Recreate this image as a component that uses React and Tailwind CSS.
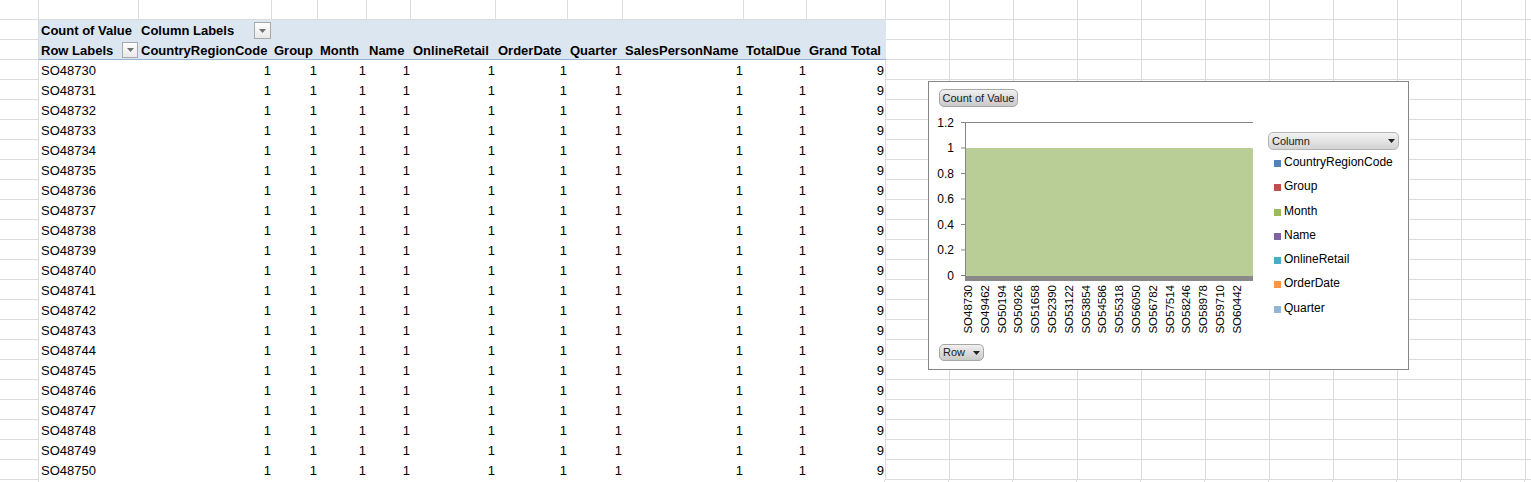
import React from "react";

const grid = "border-[#dadcdd]";

const valueCols = [
  { name: "CountryRegionCode", w: "w-[133px]" },
  { name: "Group", w: "w-[46px]" },
  { name: "Month", w: "w-[49px]" },
  { name: "Name", w: "w-[44px]" },
  { name: "OnlineRetail", w: "w-[85px]" },
  { name: "OrderDate", w: "w-[72px]" },
  { name: "Quarter", w: "w-[55px]" },
  { name: "SalesPersonName", w: "w-[121px]" },
  { name: "TotalDue", w: "w-[63px]" },
];

const extraCols = Array.from({ length: 11 }, (_, i) => i);

const rowLabels = Array.from({ length: 21 }, (_, i) => "SO" + (48730 + i));

const xLabels = [
  "SO48730", "SO49462", "SO50194", "SO50926", "SO51658", "SO52390",
  "SO53122", "SO53854", "SO54586", "SO55318", "SO56050", "SO56782",
  "SO57514", "SO58246", "SO58978", "SO59710", "SO60442",
];

const yTicks = ["1.2", "1", "0.8", "0.6", "0.4", "0.2", "0"];

const legend = [
  { name: "CountryRegionCode", color: "bg-[#4f81bd]" },
  { name: "Group", color: "bg-[#c0504d]" },
  { name: "Month", color: "bg-[#9bbb59]" },
  { name: "Name", color: "bg-[#8064a2]" },
  { name: "OnlineRetail", color: "bg-[#4bacc6]" },
  { name: "OrderDate", color: "bg-[#f79646]" },
  { name: "Quarter", color: "bg-[#95b3d7]" },
];

function Triangle({ color = "#000" }) {
  return (
    <svg width="7" height="4" viewBox="0 0 7 4">
      <path d="M0 0H7L3.5 4Z" fill={color} />
    </svg>
  );
}

function FilterButton({ w, h }) {
  return (
    <div
      className={`${w} ${h} mt-[2px] mr-[1px] shrink-0 flex items-center justify-center border border-[#a9a9a9] bg-linear-to-b from-[#fdfdfd] to-[#e9e9e9]`}
    >
      <Triangle color="#707070" />
    </div>
  );
}

function ColA() {
  return <div className={`w-[39px] shrink-0 h-full border-r border-b ${grid}`} />;
}

function Extras() {
  return extraCols.map((i) => (
    <div key={i} className={`w-[64px] shrink-0 h-full border-r border-b ${grid}`} />
  ));
}

function Chart() {
  return (
    <div className="absolute left-[928px] top-[81px] w-[481px] h-[289px] border border-[#868686] bg-white flex flex-col">
      <div className="pl-[10px] pt-[7px]">
        <div className="w-[79px] h-[18px] rounded-[5px] border border-[#a6a6a6] bg-linear-to-b from-[#f0f0f0] to-[#c9c9c9] text-[11px] leading-[16px] text-center text-[#1a1a1a]">
          Count of Value
        </div>
      </div>

      <div className="flex">
        <svg width="332" height="230" fontFamily="Liberation Sans, Arial, sans-serif">
          <rect x="37" y="41" width="287" height="128" fill="#b9cd96" />
          <rect x="37" y="169" width="287" height="5" fill="#898989" />
          <line x1="36" y1="15.5" x2="324" y2="15.5" stroke="#868686" />
          <line x1="36.5" y1="15.5" x2="36.5" y2="174" stroke="#868686" />
          {yTicks.map((t, i) => {
            const y = 15.5 + i * 25.5;
            return (
              <g key={t}>
                <line x1="32" y1={y} x2="36" y2={y} stroke="#868686" />
                <text x="25" y={y + 4.2} fontSize="12" textAnchor="end" fill="#000">
                  {t}
                </text>
              </g>
            );
          })}
          {xLabels.map((l, i) => {
            const x = 43 + i * 16.8;
            return (
              <text
                key={l}
                x={x}
                y="178"
                fontSize="11.5"
                textAnchor="end"
                fill="#000"
                transform={`rotate(-90 ${x} 178)`}
              >
                {l}
              </text>
            );
          })}
        </svg>

        <div className="ml-[7px] mt-[25px] w-[131px]">
          <div className="h-[18px] rounded-[5px] border border-[#b4b4b4] bg-linear-to-b from-[#f3f3f3] to-[#d3d3d3] flex items-center justify-between pl-[3px] pr-[3px] text-[11px] text-[#1a1a1a]">
            <span>Column</span>
            <Triangle color="#222" />
          </div>
          {legend.map((it) => (
            <div key={it.name} className="flex items-start h-[24.3px] pl-[6px]">
              <div className={`mt-[10px] w-[7px] h-[7px] mr-[3px] shrink-0 ${it.color}`} />
              <span className="text-[12px] leading-[24.3px] text-black">{it.name}</span>
            </div>
          ))}
        </div>
      </div>

      <div className="pl-[10px] mt-[7px]">
        <div className="w-[45px] h-[17px] rounded-[5px] border border-[#a6a6a6] bg-linear-to-b from-[#f0f0f0] to-[#c9c9c9] flex items-center justify-between pl-[3px] pr-[3px] text-[11px] text-[#1a1a1a]">
          <span>Row</span>
          <Triangle color="#222" />
        </div>
      </div>
    </div>
  );
}

export default function App() {
  return (
    <div className="relative w-[1531px] h-[482px] overflow-hidden bg-white font-['Liberation_Sans',Arial,sans-serif] text-[13px] text-black">
      {/* top blank row */}
      <div className="flex h-[20px]">
        <ColA />
        <div className={`w-[100px] shrink-0 h-full border-r border-b ${grid}`} />
        {valueCols.map((c) => (
          <div key={c.name} className={`${c.w} shrink-0 h-full border-r border-b ${grid}`} />
        ))}
        <div className={`w-[79px] shrink-0 h-full border-r border-b ${grid}`} />
        <Extras />
      </div>

      {/* pivot header row 1 */}
      <div className="flex h-[20px] leading-[21px] font-bold">
        <ColA />
        <div className="w-[847px] shrink-0 h-full flex bg-[#dce6f1]">
          <div className="w-[100px] shrink-0 pl-[2px] whitespace-nowrap">Count of Value</div>
          <div className="w-[133px] shrink-0 pl-[2px] flex justify-between items-start whitespace-nowrap">
            <span>Column Labels</span>
            <FilterButton w="w-[17px]" h="h-[17px]" />
          </div>
        </div>
        <Extras />
      </div>

      {/* pivot header row 2 */}
      <div className="flex h-[20px] leading-[21px] font-bold">
        <ColA />
        <div className="w-[847px] shrink-0 h-full flex bg-[#dce6f1] border-b border-[#95b3d7]">
          <div className="w-[100px] shrink-0 pl-[2px] flex justify-between items-start whitespace-nowrap">
            <span>Row Labels</span>
            <FilterButton w="w-[16px]" h="h-[16px]" />
          </div>
          {valueCols.map((c) => (
            <div key={c.name} className={`${c.w} shrink-0 pl-[2px] whitespace-nowrap`}>
              {c.name}
            </div>
          ))}
          <div className="w-[79px] shrink-0 pl-[2px] whitespace-nowrap">Grand Total</div>
        </div>
        <Extras />
      </div>

      {/* data rows */}
      {rowLabels.map((label) => (
        <div key={label} className="flex h-[20px] leading-[21px]">
          <ColA />
          <div className="w-[100px] shrink-0 pl-[2px] whitespace-nowrap">{label}</div>
          {valueCols.map((c) => (
            <div key={c.name} className={`${c.w} shrink-0 text-right pr-px`}>
              1
            </div>
          ))}
          <div className={`w-[79px] shrink-0 h-full text-right pr-[1px] border-r ${grid}`}>9</div>
          <Extras />
        </div>
      ))}

      {/* partially visible last row */}
      <div className="flex h-[20px]">
        <ColA />
        <div className="w-[767px] shrink-0" />
        <div className={`w-[79px] shrink-0 h-full border-r ${grid}`} />
        <Extras />
      </div>

      <Chart />
    </div>
  );
}
